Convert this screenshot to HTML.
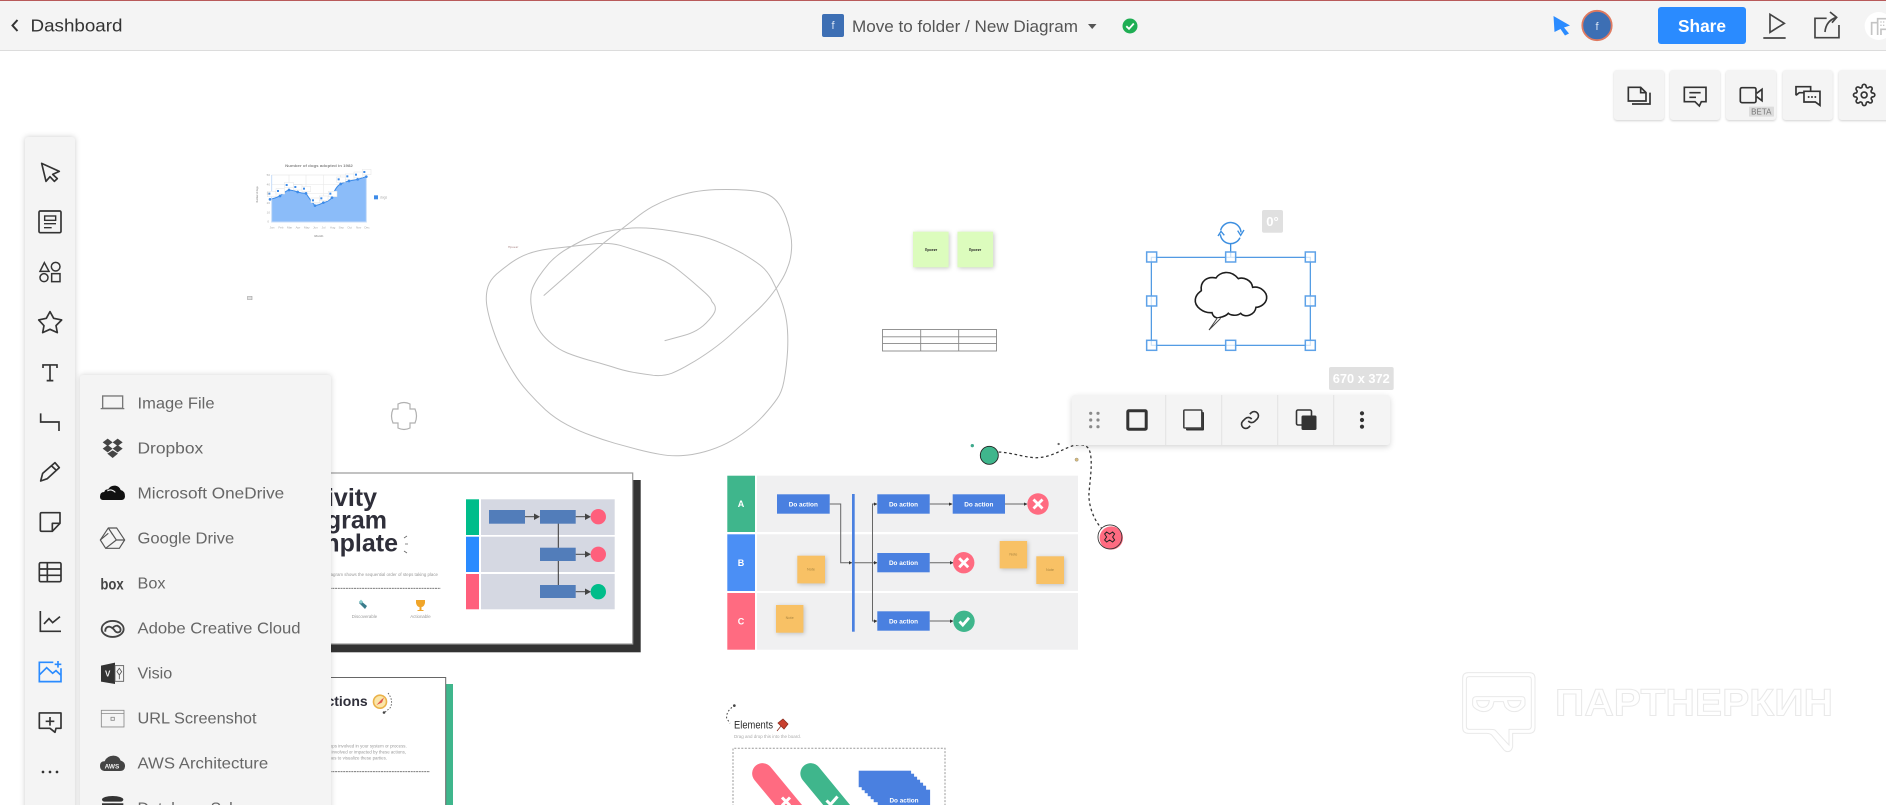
<!DOCTYPE html>
<html lang="en"><head><meta charset="utf-8"><title>New Diagram</title>
<style>
html,body{margin:0;padding:0;width:1886px;height:805px;overflow:hidden;background:#fff}
svg{display:block;position:absolute;left:0;top:0}
text{font-family:"Liberation Sans","Noto Sans CJK SC",sans-serif}
</style></head><body>
<svg xmlns="http://www.w3.org/2000/svg" width="1886" height="805" viewBox="0 0 1886 805">
<rect width="1886" height="805" fill="#fff"/>

<!-- Watermark -->
<g transform="translate(1440,650) scale(.3333)" fill="none" stroke="#e9e9e9" stroke-width="3">
<path d="M85 68H268Q285 68 285 85V233Q285 250 268 250H218V290Q215 305 203 305Q195 305 188 295L155 255Q150 250 140 250H85Q68 250 68 233V85Q68 68 85 68Z"/>
<path d="M88 80H265Q274 80 274 89V228Q274 238 265 238H207V285L165 240Q160 238 150 238H88Q79 238 79 228V89Q79 80 88 80Z"/>
<path d="M98 150Q98 140 110 140H245Q255 140 255 150V165Q250 175 235 183Q210 190 195 170L190 155H162L158 170Q145 190 120 183Q100 175 98 165Z"/>
<path d="M110 152H148Q145 172 128 172Q112 172 110 152ZM203 152H243Q240 172 222 172Q206 172 203 152Z"/>
</g>
<text x="1555" y="715.7" font-size="38" font-weight="700" fill="#fff" stroke="#e9e9e9" stroke-width="1" textLength="278" lengthAdjust="spacingAndGlyphs">ПАРТНЕРКИН</text>

<!-- Chart -->
<g transform="translate(230,150) scale(.3333)">
<text x="267" y="51" font-size="12" font-weight="700" fill="#888" text-anchor="middle" textLength="203" lengthAdjust="spacingAndGlyphs">Number of dogs adopted in 1982</text>
<g stroke="#eaeaea" stroke-width="2" fill="none"><path d="M125 75H410M125 103H410M125 131H410M125 159H410M125 187H410M177 75V215M228 75V215M280 75V215M332 75V215M383 75V215"/></g>
<path d="M120 148Q135 145 150 138Q165 124 177 120Q190 121 203 126Q215 130 228 130Q238 146 255 167Q268 165 280 158Q295 155 306 143Q316 110 332 102Q345 95 357 93L383 88L409 80V216H125V148Z" fill="#8bbcf9"/>
<path d="M120 148Q135 145 150 138Q165 124 177 120Q190 121 203 126Q215 130 228 130Q238 146 255 167Q268 165 280 158Q295 155 306 143Q316 110 332 102Q345 95 357 93L383 88L409 80" fill="none" stroke="#3d8be8" stroke-width="3"/>
<path d="M409 80V216H125V75" fill="none" stroke="#c8ddf8" stroke-width="3"/>
<g fill="#fff" stroke="#e4e4e4" stroke-width="1.5"><rect x="112" y="124" width="26" height="16"/><rect x="138" y="116" width="26" height="16"/><rect x="164" y="97" width="26" height="16"/><rect x="190" y="104" width="26" height="16"/><rect x="216" y="109" width="26" height="16"/><rect x="243" y="144" width="26" height="14"/><rect x="268" y="138" width="26" height="14"/><rect x="295" y="124" width="26" height="16"/><rect x="320" y="81" width="26" height="16"/><rect x="346" y="72" width="26" height="16"/><rect x="372" y="66" width="26" height="16"/><rect x="397" y="58" width="26" height="16"/></g>
<g fill="#3d8be8"><circle cx="120" cy="148" r="4"/><circle cx="150" cy="138" r="4"/><circle cx="177" cy="120" r="4"/><circle cx="203" cy="126" r="4"/><circle cx="228" cy="130" r="4"/><circle cx="255" cy="167" r="4"/><circle cx="280" cy="158" r="4"/><circle cx="306" cy="143" r="4"/><circle cx="332" cy="102" r="4"/><circle cx="357" cy="93" r="4"/><circle cx="383" cy="88" r="4"/><circle cx="409" cy="80" r="4"/>
<rect x="115" y="128" width="6" height="6"/><rect x="141" y="120" width="6" height="6"/><rect x="167" y="102" width="6" height="6"/><rect x="193" y="108" width="6" height="6"/><rect x="219" y="113" width="6" height="6"/><rect x="246" y="148" width="6" height="6"/><rect x="271" y="142" width="6" height="6"/><rect x="298" y="128" width="6" height="6"/><rect x="323" y="85" width="6" height="6"/><rect x="349" y="76" width="6" height="6"/><rect x="375" y="71" width="6" height="6"/><rect x="400" y="63" width="6" height="6"/><rect x="432" y="136" width="12" height="12"/></g>
<g font-size="9" fill="#aaa"><text x="450" y="145" font-size="10">dogs</text><text x="110" y="78">50</text><text x="110" y="106">40</text><text x="110" y="134">30</text><text x="110" y="162">20</text><text x="110" y="190">10</text><text x="112" y="218">0</text>
<text x="119" y="236">Jan</text><text x="145" y="236">Feb</text><text x="171" y="236">Mar</text><text x="197" y="236">Apr</text><text x="222" y="236">May</text><text x="249" y="236">Jun</text><text x="275" y="236">Jul</text><text x="300" y="236">Aug</text><text x="326" y="236">Sep</text><text x="352" y="236">Oct</text><text x="378" y="236">Nov</text><text x="403" y="236">Dec</text>
<text x="253" y="261" font-weight="700" fill="#999">Month</text></g>
<text transform="translate(84,157) rotate(-90)" font-size="9" font-weight="700" fill="#999" textLength="48" lengthAdjust="spacingAndGlyphs">Number of dogs</text>
<rect x="53" y="439" width="13" height="10" fill="none" stroke="#888" stroke-width="1.5"/><path d="M53 444H66" stroke="#888" stroke-width="1.5"/>
</g>

<!-- Freehand -->
<g transform="translate(470,180) scale(.3333)">
<path fill="none" stroke="#bdbdbd" stroke-width="3" stroke-linejoin="round" stroke-linecap="round" d="M222 346L400 190L490 120Q520 95 547 80Q575 65 607 53Q640 42 670 36Q700 31 735 29Q770 28 800 29Q830 30 855 33Q880 36 897 45Q915 55 927 72Q940 90 949 115Q958 140 962 165Q967 190 964 215Q962 240 953 262Q945 285 932 305Q920 325 900 350Q880 375 850 402L790 457Q760 485 725 510Q690 535 660 552Q630 570 605 580Q580 589 550 586Q520 582 490 577Q460 572 425 560Q390 549 355 540Q320 530 292 519Q265 508 245 491Q225 475 212 457Q200 440 192 417Q185 395 183 372Q181 350 185 332Q190 315 205 292Q220 270 237 250Q255 230 282 212Q310 195 340 180Q370 165 405 156Q440 148 475 145Q510 142 545 145Q580 148 615 154Q650 160 685 167Q720 175 755 190Q790 205 820 222Q850 240 870 255Q890 270 905 297Q920 325 932 357Q945 390 950 425Q955 460 953 510Q950 560 943 597Q937 635 921 657Q905 680 882 705Q860 730 830 752Q800 775 770 790Q740 805 705 815Q670 825 635 827Q600 829 570 823Q540 818 505 809L435 790Q400 780 365 767Q330 755 292 735Q255 715 227 690Q200 665 175 637Q150 610 130 577Q110 545 92 507Q75 470 62 427Q50 385 49 362Q48 340 54 320Q60 300 80 282Q100 265 125 247Q150 230 175 221Q200 212 235 207L305 199Q340 195 380 191Q420 188 450 196Q480 205 510 215Q540 225 570 237Q600 250 625 270Q650 290 670 307L705 338Q720 352 723 358Q725 365 731 371Q737 378 736 389Q735 400 717 420Q700 440 680 451Q660 462 640 467L585 482"/>
<text x="114" y="204" font-size="8" fill="#a88" textLength="32" lengthAdjust="spacingAndGlyphs">Проект</text>
</g>

<!-- Stickies & table -->
<g style="filter:drop-shadow(1px 1px 2px rgba(0,0,0,.22))" fill="#dcfcbd"><rect x="913" y="231.7" width="35.6" height="35.6"/><rect x="957.5" y="231.7" width="35.6" height="35.6"/></g>
<text x="931" y="251" font-size="3.6" font-weight="700" fill="#222" text-anchor="middle">Проект</text>
<text x="975" y="251" font-size="3.6" font-weight="700" fill="#222" text-anchor="middle">Проект</text>
<g fill="none" stroke="#888" stroke-width=".9"><rect x="882.5" y="329.5" width="114" height="21.5"/><path d="M882.5 336.8H996.5M882.5 343.6H996.5M920.7 329.5V351M958.7 329.5V351"/></g>

<!-- Small puzzle outline -->
<path d="M398 404Q404 401 410 404V409H415Q418 416 415 423H410V428Q404 431 398 428V423H393Q390 416 393 409H398Z" fill="#fff" stroke="#b0b0b0" stroke-width="1.2"/>

<!-- Activity slide -->
<rect x="300" y="480" width="340.7" height="172.3" fill="#333"/>
<rect x="300" y="473" width="332.7" height="171" fill="#fff" stroke="#999" stroke-width="1.2"/>
<g font-size="25" font-weight="700" fill="#2f2f3a" text-anchor="end"><text x="377" y="506">Activity</text><text x="387" y="528.7">Diagram</text><text x="398" y="551.7">Template</text></g>
<path d="M404 538L407 536M405 544H408M404 551L407 553" stroke="#666" stroke-width=".8"/>
<text x="438" y="576" font-size="4.4" fill="#999" text-anchor="end">An activity diagram shows the sequential order of steps taking place</text>
<path d="M300 588.3H440.7" stroke="#666" stroke-width=".8" stroke-dasharray="2 .7"/>
<g fill="#999" font-size="4.4" text-anchor="middle"><text x="364.5" y="618">Discoverable</text><text x="420.5" y="618">Actionable</text></g>
<path d="M361 601L367 606L365 609L359 603Z" fill="#3a7c8c"/><rect x="360" y="600" width="3" height="3" fill="#8cc" transform="rotate(45 361 601)"/>
<path d="M416 600H425V603Q424 607 421.5 607V610H423.5V611H417.5V610H419.5V607Q417 607 416 603Z" fill="#f0a52a"/>
<g fill="#d5d8e2"><rect x="481" y="499.3" width="133.7" height="35.7"/><rect x="481" y="536.7" width="133.7" height="35.3"/><rect x="481" y="574" width="133.7" height="35.3"/></g>
<rect x="466" y="499.3" width="13" height="35.7" fill="#00bd8a"/><rect x="466" y="536.7" width="13" height="35.3" fill="#2a8bff"/><rect x="466" y="574" width="13" height="35.3" fill="#ff5f7c"/>
<path d="M558.3 523V585" stroke="#333" stroke-width="1"/>
<g fill="#527dba"><rect x="489" y="510" width="36" height="13.7"/><rect x="540" y="510" width="35.7" height="13.7"/><rect x="540" y="547.7" width="35.7" height="13.3"/><rect x="540" y="585" width="35.7" height="13"/></g>
<g stroke="#444" stroke-width="1" fill="#444"><path d="M525 516.7H535"/><path d="M575.7 516.7H586"/><path d="M575.7 554.3H586"/><path d="M575.7 591.7H586"/></g>
<g fill="#444"><path d="M534 513.5L540 516.7L534 520Z"/><path d="M585 513.5L591 516.7L585 520Z"/><path d="M585 551L591 554.3L585 557.5Z"/><path d="M585 588.5L591 591.7L585 595Z"/></g>
<circle cx="598.3" cy="516.7" r="7.7" fill="#ff5f7c"/><circle cx="598.3" cy="554.3" r="7.7" fill="#ff5f7c"/><circle cx="598.3" cy="591.7" r="7.7" fill="#00bd8a"/>

<!-- Second slide -->
<rect x="400" y="684" width="53" height="125" fill="#3fb68c"/>
<rect x="300" y="677.5" width="145.7" height="130" fill="#fff" stroke="#666" stroke-width="1"/>
<text x="367.7" y="706" font-size="14" font-weight="700" fill="#2f2f3a" text-anchor="end">Actions</text>
<circle cx="380" cy="701.7" r="6.5" fill="#fbe6a8" stroke="#eab24a" stroke-width="1.6"/><path d="M376.5 705L381 700L384 697.5L382 702.5Z" fill="#e2574c"/>
<path d="M388 693Q394 701 390 708L384 713" fill="none" stroke="#555" stroke-width=".9" stroke-dasharray="1.5 1.5"/><circle cx="384" cy="712.5" r="1.3" fill="#444"/>
<g font-size="4.4" fill="#999" text-anchor="end"><text x="406.7" y="747.5">the steps involved in your system or process.</text><text x="406" y="753.5">who is involved or impacted by these actions,</text><text x="387" y="759.5">use lanes to visualize these parties.</text></g>
<path d="M300 771.7H430" stroke="#666" stroke-width=".8" stroke-dasharray="2 .7"/>

<!-- Swimlane -->
<g fill="#f0f0f1"><rect x="757" y="475.7" width="321" height="56.3"/><rect x="757" y="534.3" width="321" height="56.7"/><rect x="757" y="593" width="321" height="56.7"/></g>
<rect x="727.3" y="475.7" width="27.7" height="56.3" fill="#3fb68c"/><rect x="727.3" y="534.3" width="27.7" height="56.7" fill="#4b8ff5"/><rect x="727.3" y="593" width="27.7" height="56.7" fill="#ff6b81"/>
<g fill="#fff" font-size="9" font-weight="700" text-anchor="middle"><text x="741" y="507">A</text><text x="741" y="566">B</text><text x="741" y="624.5">C</text></g>
<g fill="none" stroke="#666" stroke-width="1"><path d="M829.7 504H840.7V562.7H877"/><path d="M877 504H872.5V621H877"/><path d="M929.7 504H952"/><path d="M1005 504H1027"/><path d="M929.7 562.7H953"/><path d="M929.7 621H953"/></g>
<rect x="852" y="494" width="2.7" height="137.7" fill="#4a80e0"/>
<g fill="#333"><path d="M849 561L852 562.7L849 564.5Z"/><path d="M874 561L877.3 562.7L874 564.5Z"/><path d="M874 502.5L877.3 504L874 505.8Z"/><path d="M874 619.5L877.3 621L874 623Z"/><path d="M949 502.5L952.7 504L949 505.8Z"/><path d="M1024 502.5L1027.5 504L1024 505.8Z"/><path d="M950 561L953.5 562.7L950 564.5Z"/><path d="M950 619.5L953.5 621L950 623Z"/></g>
<g fill="#4a80e0"><rect x="777" y="494.3" width="52.7" height="19.4"/><rect x="877.3" y="494.3" width="52.4" height="19.4"/><rect x="952.7" y="494.3" width="52.3" height="19.4"/><rect x="877.3" y="553" width="52.4" height="19.3"/><rect x="877.3" y="611.3" width="52.4" height="19.4"/></g>
<g fill="#fff" font-size="6.4" font-weight="700" text-anchor="middle"><text x="803.3" y="506.3">Do action</text><text x="903.5" y="506.3">Do action</text><text x="978.8" y="506.3">Do action</text><text x="903.5" y="565">Do action</text><text x="903.5" y="623.3">Do action</text></g>
<g fill="#f8c165" style="filter:drop-shadow(1px 1px 2px rgba(0,0,0,.2))"><rect x="797.3" y="555.7" width="27.7" height="27.7"/><rect x="999.7" y="541" width="27.4" height="27.4"/><rect x="1036.3" y="556.3" width="27.7" height="27.7"/><rect x="776" y="605" width="27.4" height="27.7"/></g>
<g fill="#a8843f" font-size="3.8" text-anchor="middle"><text x="811" y="570.5">Note</text><text x="1013.4" y="555.5">Note</text><text x="1050" y="571">Note</text><text x="789.7" y="619">Note</text></g>
<circle cx="1038" cy="504" r="10.7" fill="#ff6b81"/><circle cx="963.7" cy="562.7" r="10.7" fill="#ff6b81"/><circle cx="964" cy="621.3" r="10.7" fill="#3fb68c"/>
<path d="M1033.5 499.5L1042.5 508.5M1042.5 499.5L1033.5 508.5M959.2 558.2L968.2 567.2M968.2 558.2L959.2 567.2" stroke="#fff" stroke-width="2.8" fill="none"/>
<path d="M959.5 621.5L962.8 625L969 617.8" stroke="#fff" stroke-width="2.8" fill="none"/>

<!-- Dashed connector -->
<g transform="translate(710,440) scale(.3333)">
<path d="M866 36C910 38 950 55 985 53C1030 50 1060 25 1090 17C1110 12 1130 12 1138 30C1150 60 1140 120 1137 160C1135 200 1155 245 1175 265" fill="none" stroke="#333" stroke-width="3.8" stroke-dasharray="8 8"/>
<circle cx="838" cy="46" r="27" fill="#3fb68c" stroke="#222" stroke-width="2.6"/>
<circle cx="787" cy="17" r="5" fill="#3fa98c"/><circle cx="1046" cy="12" r="3.5" fill="#666"/><circle cx="1100" cy="59" r="5" fill="#d9b979" stroke="#998" stroke-width="1.5"/>
<circle cx="1204" cy="294" r="35" fill="#ff6b81"/><circle cx="1200" cy="291" r="36" fill="none" stroke="#333" stroke-width="2.6"/>
<path d="M1190 276L1199 282L1208 276L1214 282L1208 291L1214 300L1208 306L1199 300L1190 306L1184 300L1190 291L1184 282Z" fill="none" stroke="#222" stroke-width="3"/>
<!-- elements arc -->
<path d="M75 796Q48 812 50 835L60 850" fill="none" stroke="#444" stroke-width="3" stroke-dasharray="5 6"/><circle cx="73" cy="797" r="4" fill="#444"/>
</g>

<!-- Elements -->
<text x="734" y="728.7" font-size="11" fill="#2b2b2b" textLength="39" lengthAdjust="spacingAndGlyphs">Elements</text>
<path d="M777 731L781 726L778 723L783 719L788 724L784 729L781 726" fill="#c9402e" stroke="#8a2a1c" stroke-width=".8"/>
<text x="734" y="738" font-size="4.2" fill="#aaa" textLength="67" lengthAdjust="spacingAndGlyphs">Drag and drop this into the board.</text>
<path d="M733 810V748.3H945V810" fill="none" stroke="#999" stroke-width="1" stroke-dasharray="2 1.5"/>
<path d="M762.5 773.5L801 820" stroke="#ff6b81" stroke-width="20.7" stroke-linecap="round" fill="none"/>
<path d="M810.7 773.5L849 820" stroke="#3fb68c" stroke-width="20.7" stroke-linecap="round" fill="none"/>
<path d="M782 797.5L790 805.5M790 797.5L782 805.5M826.5 800.5L830.5 804.5L837.5 796.5" stroke="#fff" stroke-width="3" fill="none"/>
<g fill="#4a80e0"><rect x="858.7" y="770.7" width="52.4" height="16.5"/><rect x="861.7" y="773.7" width="52.4" height="16.5"/><rect x="864.7" y="776.7" width="52.4" height="16.5"/><rect x="867.7" y="779.7" width="52.4" height="16.5"/><rect x="870.7" y="782.7" width="52.4" height="16.5"/><rect x="873.7" y="785.7" width="52.4" height="16.5"/><rect x="877.7" y="789.7" width="52.4" height="16.5"/></g>
<text x="904" y="802.5" fill="#fff" font-size="6.4" font-weight="700" text-anchor="middle">Do action</text>

<!-- Selection -->
<g transform="translate(1060,200) scale(.3333)">
<path d="M456 338C430 340 403 320 406 298C408 282 420 276 424 272C420 245 440 228 468 234C478 218 510 206 535 236C550 230 575 240 578 262C600 258 622 275 620 295C618 312 600 322 588 322C585 345 555 355 542 340C530 350 510 345 505 340C495 352 480 352 472 354C462 352 458 346 456 338Z" fill="#fff" stroke="#1e1e1e" stroke-width="4.8"/>
<path d="M472 354L447 390L482 355" fill="#fff" stroke="#444" stroke-width="3"/>
<rect x="274" y="172" width="477" height="264" fill="none" stroke="#3d8fe0" stroke-width="3.4"/>
<path d="M512 130V172" stroke="#3d8fe0" stroke-width="4"/>
<path d="M482 91A31 31 0 0 1 543 97M540 113A31 31 0 0 1 481 103" fill="none" stroke="#3d8fe0" stroke-width="4.5"/>
<path d="M474 108L483 94L493 106M533 92L542 106L552 90" fill="none" stroke="#3d8fe0" stroke-width="4"/>
<g fill="#fff" fill-opacity=".75" stroke="#5ea2e8" stroke-width="4.5"><rect x="260" y="156" width="30" height="30"/><rect x="497" y="156" width="30" height="30"/><rect x="736" y="156" width="30" height="30"/><rect x="260" y="288" width="30" height="30"/><rect x="736" y="288" width="30" height="30"/><rect x="260" y="421" width="30" height="30"/><rect x="497" y="421" width="30" height="30"/><rect x="736" y="421" width="30" height="30"/></g>
</g>
<rect x="1262" y="210" width="21" height="22.7" rx="2" fill="#e0e0e0"/>
<text x="1272.5" y="226" font-size="13" font-weight="700" fill="#fff" text-anchor="middle">0°</text>
<rect x="1329" y="367" width="64.7" height="23" rx="2" fill="#e0e0e0"/>
<text x="1361.3" y="383" font-size="13" font-weight="700" fill="#fff" text-anchor="middle" textLength="57" lengthAdjust="spacingAndGlyphs">670 x 372</text>

<!-- Float toolbar -->
<rect x="1071.7" y="395" width="318.3" height="50" rx="3" fill="#f4f4f4" style="filter:drop-shadow(0 2px 3px rgba(0,0,0,.16))"/>
<path d="M1165.7 395V445M1221.7 395V445M1277.7 395V445M1333.7 395V445" stroke="#e2e2e2" stroke-width="1"/>
<g fill="#8a8a8a"><circle cx="1090.7" cy="413.3" r="1.6"/><circle cx="1098" cy="413.3" r="1.6"/><circle cx="1090.7" cy="420" r="1.6"/><circle cx="1098" cy="420" r="1.6"/><circle cx="1090.7" cy="426.7" r="1.6"/><circle cx="1098" cy="426.7" r="1.6"/></g>
<rect x="1127.8" y="410.8" width="18.4" height="18.4" rx="1" fill="none" stroke="#333" stroke-width="3"/>
<rect x="1186" y="412" width="18" height="18.5" rx="1" fill="#333"/><rect x="1183.8" y="410" width="18" height="18" rx="1" fill="#f4f4f4" stroke="#444" stroke-width="1.6"/>
<g transform="translate(1239.8,409.8) scale(.85)" fill="none" stroke="#333" stroke-width="1.9"><path d="M10 13a5 5 0 0 0 7.54.54l3-3a5 5 0 0 0-7.07-7.07l-1.72 1.71"/><path d="M14 11a5 5 0 0 0-7.54-.54l-3 3a5 5 0 0 0 7.07 7.07l1.71-1.71"/></g>
<rect x="1296.5" y="410" width="15" height="15" rx="1.5" fill="none" stroke="#333" stroke-width="1.6"/><rect x="1301.5" y="415.5" width="15" height="14.5" rx="1.5" fill="#333"/>
<g fill="#333"><circle cx="1362" cy="413.3" r="2.1"/><circle cx="1362" cy="420" r="2.1"/><circle cx="1362" cy="426.7" r="2.1"/></g>

<!-- Header -->
<rect x="0" y="0" width="1886" height="50.5" fill="#f4f4f4"/>
<rect x="0" y="0" width="1886" height="1" fill="#b85a5a"/>
<rect x="0" y="50" width="1886" height="1" fill="#dcdcdc"/>
<path d="M17.5 20L12.5 25.5L17.5 31" fill="none" stroke="#333" stroke-width="2"/>
<text x="30.5" y="31.5" font-size="17.5" fill="#333" textLength="92" lengthAdjust="spacingAndGlyphs">Dashboard</text>
<rect x="822" y="14" width="22" height="23" rx="2" fill="#3d6fb4"/>
<text x="833" y="29" font-size="11" fill="#dbe6f5" text-anchor="middle">f</text>
<text x="852" y="32" font-size="17" fill="#555" textLength="226" lengthAdjust="spacingAndGlyphs">Move to folder / New Diagram</text>
<path d="M1088 24H1096.5L1092.2 29Z" fill="#555"/>
<circle cx="1130" cy="26" r="7.5" fill="#1fae54"/><path d="M1126.3 26.2L1129 28.8L1133.8 23.5" fill="none" stroke="#fff" stroke-width="1.8"/>
<path d="M1553.5 16L1570 25.5L1564 27.5L1569 33.5L1565 35.5L1560.5 29L1554.5 32Z" fill="#2a8bff"/>
<circle cx="1597" cy="25.5" r="14.7" fill="#3d6fb4" stroke="#e07a60" stroke-width="1.8"/>
<text x="1597" y="30" font-size="11" fill="#dbe6f5" text-anchor="middle">f</text>
<rect x="1658" y="7" width="88" height="37" rx="3" fill="#2a8bff"/>
<text x="1702" y="31.8" font-size="17.5" font-weight="700" fill="#fff" text-anchor="middle" textLength="48" lengthAdjust="spacingAndGlyphs">Share</text>

<!-- top right icons -->
<g transform="translate(1610,0) scale(.3333)">
<path d="M480 43L523 70L480 97Z" fill="none" stroke="#444" stroke-width="5"/><path d="M460 114H527" stroke="#444" stroke-width="5"/>
<path d="M650 55H615V113H687V75" fill="none" stroke="#444" stroke-width="5"/><path d="M645 96Q648 62 680 52M660 36L680 52L666 68" fill="none" stroke="#444" stroke-width="5"/>
<circle cx="806" cy="78" r="42" fill="#fff"/>
<path d="M785 105V68H803V105M803 105V56H828M813 105V88H828" fill="none" stroke="#c4c4c4" stroke-width="5"/>
<g fill="#c4c4c4"><rect x="811" y="64" width="4" height="4"/><rect x="819" y="64" width="4" height="4"/><rect x="811" y="74" width="4" height="4"/><rect x="819" y="74" width="4" height="4"/></g>
</g>
<g fill="#f4f4f4" style="filter:drop-shadow(0 1px 1px rgba(0,0,0,.18))"><rect x="1614" y="70" width="50" height="50" rx="3"/><rect x="1670" y="70" width="50" height="50" rx="3"/><rect x="1726" y="70" width="50" height="50" rx="3"/><rect x="1782.7" y="70" width="50" height="50" rx="3"/><rect x="1838.7" y="70" width="60" height="50" rx="3"/></g>
<g transform="translate(1610,0) scale(.3333)" fill="none" stroke="#333" stroke-width="5">
<path d="M55 262H92L108 278V303H55ZM92 262V278H108M66 312H120V278"/>
<path d="M223 262H288V305H274L268 318L255 305H223ZM238 278H272M238 292H258"/>
<rect x="391" y="263" width="47" height="45" rx="5"/><path d="M440 280L456 268V302L440 290"/>
<path d="M558 286V260H602V274M558 286L568 278H582"/><path d="M582 274H630V316L616 306H582Z"/>
<g fill="#333" stroke="none"><circle cx="596" cy="291" r="3"/><circle cx="606" cy="291" r="3"/><circle cx="616" cy="291" r="3"/></g>
<rect x="417" y="320" width="75" height="30" rx="2" fill="#dcdcdc" stroke="none"/>
<text x="454" y="344" font-size="24" fill="#777" stroke="none" text-anchor="middle">BETA</text>
</g>
<g transform="translate(1852.5,83.3) scale(.97)" fill="none" stroke="#333" stroke-width="1.7"><circle cx="12" cy="12" r="3"/><path d="M19.4 15a1.65 1.65 0 0 0 .33 1.82l.06.06a2 2 0 0 1 0 2.83 2 2 0 0 1-2.83 0l-.06-.06a1.65 1.65 0 0 0-1.82-.33 1.65 1.65 0 0 0-1 1.51V21a2 2 0 0 1-2 2 2 2 0 0 1-2-2v-.09A1.65 1.65 0 0 0 9 19.4a1.65 1.65 0 0 0-1.82.33l-.06.06a2 2 0 0 1-2.83 0 2 2 0 0 1 0-2.83l.06-.06a1.65 1.65 0 0 0 .33-1.82 1.65 1.65 0 0 0-1.51-1H3a2 2 0 0 1-2-2 2 2 0 0 1 2-2h.09A1.65 1.65 0 0 0 4.6 9a1.65 1.65 0 0 0-.33-1.82l-.06-.06a2 2 0 0 1 0-2.83 2 2 0 0 1 2.83 0l.06.06a1.65 1.65 0 0 0 1.82.33H9a1.65 1.65 0 0 0 1-1.51V3a2 2 0 0 1 2-2 2 2 0 0 1 2 2v.09a1.65 1.65 0 0 0 1 1.51 1.65 1.65 0 0 0 1.82-.33l.06-.06a2 2 0 0 1 2.83 0 2 2 0 0 1 0 2.83l-.06.06a1.65 1.65 0 0 0-.33 1.82V9a1.65 1.65 0 0 0 1.51 1H21a2 2 0 0 1 2 2 2 2 0 0 1-2 2h-.09a1.65 1.65 0 0 0-1.51 1z"/></g>

<!-- Left toolbar -->
<rect x="25" y="137" width="50" height="690" rx="3" fill="#f4f4f4" style="filter:drop-shadow(0 0 3px rgba(0,0,0,.2))"/>
<g transform="translate(20,140) scale(.3333)" fill="none" stroke="#333" stroke-width="5">
<path d="M65 70L118 94L98 103L112 116L103 124L90 110L78 124Z" stroke-linejoin="round"/>
<rect x="57" y="213" width="66" height="65" rx="4"/><rect x="74" y="228" width="33" height="13" stroke-width="4.2"/><path d="M72 251H108M72 263H95" stroke-width="4.2"/>
<path d="M73 368L60 394H87Z" stroke-width="4.5"/><circle cx="107" cy="380" r="13" stroke-width="4.5"/><circle cx="72" cy="413" r="12" stroke-width="4.5"/><rect x="95" y="401" width="25" height="24" stroke-width="4.5"/>
<path d="M90 515L101 535L125 540L108 557L112 578L90 568L68 578L72 557L56 540L79 535Z" stroke-linejoin="round"/>
<path d="M69 684V675H111V684M90 675V722M80 722H100"/>
</g>
<g transform="translate(0,400) scale(.3333)" fill="none" stroke="#333" stroke-width="5">
<path d="M122 40V66H177V93"/>
<path d="M122 243L128 220L165 188L178 203L142 236ZM155 198L170 212" stroke-linejoin="round"/>
<path d="M125 338H180V370L157 394H125Q121 394 121 390V342Q121 338 125 338ZM180 370H157V394" stroke-linejoin="round"/>
<rect x="118" y="488" width="65" height="57" rx="4"/><path d="M118 507H183M118 526H183M142 488V545"/>
<path d="M121 633V694H183M132 672L147 656L158 668L180 650"/>
<g stroke="#2a8bff"><path d="M160 787H118V845H183V805M118 825L140 803L158 820L168 812L183 826M174 783V803M164 793H184"/></g>
<path d="M118 939H183V985H168L165 997L150 985H118ZM150 951V977M137 964H163" stroke-linejoin="round"/>
<g fill="#333" stroke="none"><circle cx="129" cy="1116" r="4"/><circle cx="150" cy="1116" r="4"/><circle cx="171" cy="1116" r="4"/></g>
</g>

<!-- Menu -->
<rect x="80" y="375" width="251" height="450" rx="3" fill="#f4f4f4" style="filter:drop-shadow(0 0 3px rgba(0,0,0,.18))"/>
<g font-size="16" fill="#666">
<text x="137.5" y="408.7" textLength="77" lengthAdjust="spacingAndGlyphs">Image File</text>
<text x="137.5" y="453.7" textLength="65.7" lengthAdjust="spacingAndGlyphs">Dropbox</text>
<text x="137.5" y="498.7" textLength="146.7" lengthAdjust="spacingAndGlyphs">Microsoft OneDrive</text>
<text x="137.5" y="543.7" textLength="96.7" lengthAdjust="spacingAndGlyphs">Google Drive</text>
<text x="137.5" y="588.7" textLength="28" lengthAdjust="spacingAndGlyphs">Box</text>
<text x="137.5" y="633.7" textLength="163" lengthAdjust="spacingAndGlyphs">Adobe Creative Cloud</text>
<text x="137.5" y="678.7" textLength="34.7" lengthAdjust="spacingAndGlyphs">Visio</text>
<text x="137.5" y="723.7" textLength="119" lengthAdjust="spacingAndGlyphs">URL Screenshot</text>
<text x="137.5" y="768.7" textLength="130.7" lengthAdjust="spacingAndGlyphs">AWS Architecture</text>
<text x="137.5" y="813.7">Database Schema</text>
</g>
<g transform="translate(20,140) scale(.3333)" fill="none" stroke="#777" stroke-width="4"><rect x="248" y="768" width="60" height="37"/><path d="M242 806H313"/></g>
<g transform="translate(0,400) scale(.3333)">
<g fill="#444"><path d="M308 127L323 116L338 127L323 138Z"/><path d="M338 127L353 116L368 127L353 138Z"/><path d="M308 146L323 135L338 146L323 157Z"/><path d="M338 146L353 135L368 146L353 157Z"/><path d="M322 161L338 151L354 161L338 174Z"/></g>
<path d="M300 290Q300 276 313 276Q314 268 324 268Q332 256 346 257Q358 259 362 270Q376 274 375 290Q374 300 365 300H308Q300 299 300 290Z" fill="#111"/><path d="M322 273Q333 265 346 277" stroke="#f4f4f4" stroke-width="3" fill="none"/>
<g fill="none" stroke="#555" stroke-width="3.5"><path d="M325 384H350L374 420L358 445H317L301 420Z"/><path d="M325 384L349 420H374M349 420L317 445M325 384L338 404M301 420L325 400"/></g>
<text x="301" y="568" font-size="46" font-weight="700" fill="#444" textLength="70" lengthAdjust="spacingAndGlyphs">box</text>
<g fill="none" stroke="#444" stroke-width="5.5"><ellipse cx="338" cy="687" rx="33" ry="24"/><path d="M316 695Q315 681 328 680Q338 682 346 694Q352 700 360 695Q366 684 352 677Q342 677 336 687"/></g>
<path d="M303 797L345 788V852L303 845Z" fill="#333"/><rect x="345" y="797" width="26" height="47" fill="none" stroke="#555" stroke-width="2.5"/>
<text x="323" y="830" font-size="24" font-weight="700" fill="#f4f4f4" text-anchor="middle">V</text><path d="M358 805L365 815L358 825L351 815ZM358 825V838" fill="none" stroke="#555" stroke-width="2.5"/>
<g fill="none" stroke="#888" stroke-width="2.5"><rect x="304" y="931" width="68" height="50"/><path d="M304 941H372"/><rect x="333" y="952" width="10" height="9"/></g>
<path d="M300 1098Q300 1084 314 1084Q320 1068 340 1067Q358 1068 362 1082Q376 1086 375 1100Q374 1113 360 1113H313Q300 1111 300 1098Z" fill="#444"/>
<text x="336" y="1106" font-size="20" font-weight="700" fill="#f4f4f4" text-anchor="middle" textLength="44" lengthAdjust="spacingAndGlyphs">AWS</text>
<ellipse cx="338" cy="1199" rx="32" ry="11" fill="#333"/><rect x="306" y="1205" width="64" height="5" fill="#f4f4f4"/><rect x="306" y="1210" width="64" height="10" fill="#333"/>
</g>
</svg>
</body></html>
